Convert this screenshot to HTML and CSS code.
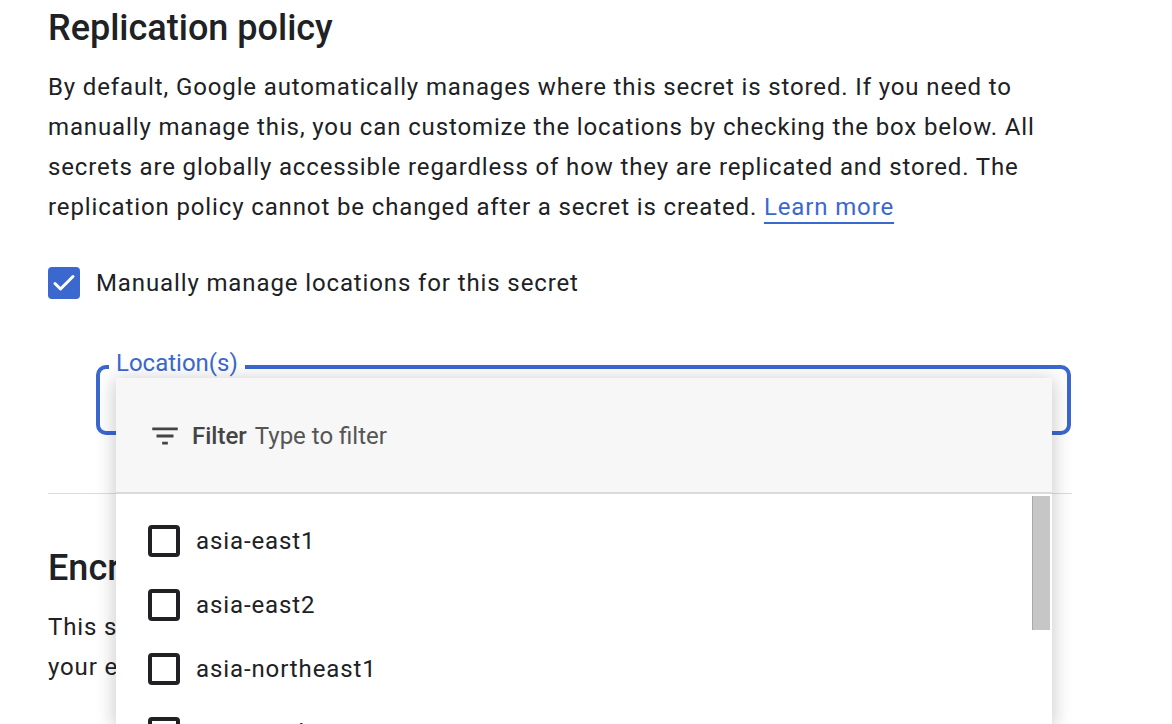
FILE: index.html
```html
<!DOCTYPE html>
<html lang="en">
<head>
<meta charset="utf-8">
<title>Replication policy</title>
<link rel="stylesheet" href="styles.css">
</head>
<body>
<main class="page">
  <section class="section">
    <h2 class="section-title">Replication policy</h2>
    <p class="section-text">By default, Google automatically manages where this secret is stored. If you need to manually manage this, you can customize the locations by checking the box below. All secrets are globally accessible regardless of how they are replicated and stored. The replication policy cannot be changed after a secret is created. <a class="link" href="#">Learn more</a></p>
    <label class="check-row">
      <span class="checkbox checkbox-checked">
        <svg class="check-mark" viewBox="0 0 32 32" width="32" height="32"><path d="M7 16.5l5.5 5.5L25 9.5" fill="none" stroke="#fff" stroke-width="3" stroke-linecap="round" stroke-linejoin="round"/></svg>
      </span>
      <span class="check-label">Manually manage locations for this secret</span>
    </label>
    <div class="field">
      <div class="outline">
        <span class="outline-label">Location(s)</span>
      </div>
      <div class="dropdown">
        <div class="dropdown-filter">
          <svg class="filter-icon" viewBox="0 0 24 24" width="34" height="34"><path d="M10 18h4v-2h-4v2zM3 6v2h18V6H3zm3 7h12v-2H6v2z" fill="#444"/></svg>
          <span class="filter-name">Filter</span>
          <span class="filter-placeholder">Type to filter</span>
        </div>
        <ul class="option-list">
          <li class="option"><span class="checkbox"></span><span class="option-text">asia-east1</span></li>
          <li class="option"><span class="checkbox"></span><span class="option-text">asia-east2</span></li>
          <li class="option"><span class="checkbox"></span><span class="option-text">asia-northeast1</span></li>
          <li class="option"><span class="checkbox"></span><span class="option-text">asia-northeast2</span></li>
        </ul>
        <div class="scroll-thumb"></div>
      </div>
    </div>
  </section>
  <hr class="divider">
  <section class="section">
    <h2 class="section-title">Encryption</h2>
    <p class="section-text">This secret is encrypted with a Google-managed key by default. If you need to<br>your encryption keys, you can use a customer-managed key instead.</p>
  </section>
</main>
</body>
</html>
```
FILE: styles.css
```css
html, body {
  margin: 0;
  padding: 0;
  overflow: hidden;
  background: #fff;
}
body {
  font-family: Roboto, "Liberation Sans", Arial, sans-serif;
  color: #202124;
  height: 724px;
}
.page {
  padding: 6px 0 0 48px;
  width: 1024px;
}
.section-title {
  margin: 0;
  font-size: 36px;
  line-height: 44px;
  font-weight: 500;
  color: #202124;
}
.section-text {
  margin: 17px 0 0;
  font-size: 24px;
  line-height: 40px;
  letter-spacing: 0.87px;
  color: #202124;
}
.link {
  color: #3b68cf;
  text-decoration: underline;
  text-decoration-thickness: 2px;
  text-underline-offset: 7px;
}
.check-row {
  display: flex;
  align-items: center;
  gap: 16px;
  margin-top: 40px;
  height: 32px;
}
.check-label {
  font-size: 24px;
  line-height: 32px;
  letter-spacing: 0.88px;
}
.checkbox {
  box-sizing: border-box;
  width: 32px;
  height: 32px;
  border: 4px solid #202124;
  border-radius: 4px;
  flex: none;
  display: flex;
  align-items: center;
  justify-content: center;
}
.checkbox-checked {
  background: #3b68cf;
  border: 0;
}
.check-mark {
  flex: none;
  display: block;
}
.field {
  position: relative;
  margin: 66px 0 0 48px;
  width: 975px;
}
.outline {
  position: relative;
  box-sizing: border-box;
  height: 70px;
  border: 4px solid #3b68cf;
  border-radius: 10px;
}
.outline-label {
  position: absolute;
  left: 9px;
  top: -20px;
  padding: 0 7px;
  background: #fff;
  color: #3b68cf;
  font-size: 24px;
  line-height: 28px;
}
.dropdown {
  position: absolute;
  left: 20px;
  top: 13px;
  width: 936px;
  height: 346px;
  background: #fff;
  box-shadow: 0 3px 18px 2px rgba(0, 0, 0, 0.2);
  overflow: hidden;
}
.dropdown-filter {
  box-sizing: border-box;
  height: 116px;
  background: #f7f7f7;
  border-bottom: 2px solid #dadada;
  display: flex;
  align-items: center;
  padding-left: 32px;
  padding-top: 2px;
  font-size: 24px;
  color: #444;
}
.filter-icon {
  margin-right: 10px;
}
.filter-name {
  font-weight: 500;
  margin-right: 8px;
}
.filter-placeholder {
  color: #555;
}
.option-list {
  list-style: none;
  margin: 0;
  padding: 15px 0 0 32px;
}
.option {
  display: flex;
  align-items: center;
  gap: 16px;
  height: 64px;
}
.option-text {
  font-size: 24px;
  letter-spacing: 0.9px;
  color: #202124;
}
.scroll-thumb {
  position: absolute;
  right: 2px;
  top: 118px;
  width: 17px;
  height: 134px;
  background: #c6c6c6;
  border-left: 1px solid #a9a9a9;
}
.divider {
  margin: 58px 0 0;
  border: 0;
  border-top: 1px solid #dadce0;
  height: 0;
}
.divider + .section {
  margin-top: 52px;
}
```
